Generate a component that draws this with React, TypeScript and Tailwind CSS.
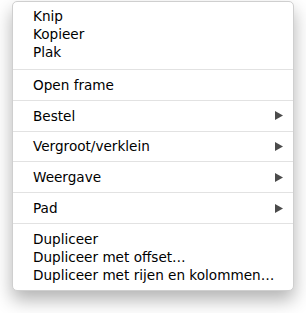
import React from 'react';

interface MenuItem {
  label: string;
  submenu?: boolean;
}

const sections: MenuItem[][] = [
  [{ label: 'Knip' }, { label: 'Kopieer' }, { label: 'Plak' }],
  [{ label: 'Open frame' }],
  [{ label: 'Bestel', submenu: true }],
  [{ label: 'Vergroot/verklein', submenu: true }],
  [{ label: 'Weergave', submenu: true }],
  [{ label: 'Pad', submenu: true }],
  [
    { label: 'Dupliceer' },
    { label: 'Dupliceer met offset…' },
    { label: 'Dupliceer met rijen en kolommen…' },
  ],
];

function Arrow() {
  return (
    <svg width="8" height="9" viewBox="0 0 8 9" className="shrink-0">
      <path d="M0 0 L8 4.5 L0 9 Z" fill="#4b4b4b" />
    </svg>
  );
}

export default function App() {
  return (
    <div className="w-[306px] h-[313px] bg-white pt-px pl-3">
      {/* Context menu */}
      <div
        className="w-[282px] h-[290px] bg-white border border-[#cfcfcf] rounded-[5px] shadow-[0_9px_18px_rgba(0,0,0,0.3)] flex flex-col text-[13.6px] leading-[18px] text-black overflow-hidden"
        style={{ fontFamily: '"DejaVu Sans", "Lucida Grande", sans-serif' }}
      >
        {sections.map((section, i) => {
          const first = i === 0;
          const last = i === sections.length - 1;
          const single = section.length === 1;
          return (
            <div
              key={i}
              className={
                (first ? 'pt-[5px] pb-[8px] ' : '') +
                (last ? 'pt-[6px] pb-[6px] border-t border-[#e2e2e2] ' : '') +
                (single ? 'h-[31px] border-t border-[#e2e2e2] flex items-center' : '')
              }
            >
              <div className="w-full">
                {section.map((item) => (
                  <div key={item.label} className="flex items-center justify-between pl-5 pr-[10px] h-[18px]">
                    <span className="whitespace-nowrap">{item.label}</span>
                    {item.submenu && <Arrow />}
                  </div>
                ))}
              </div>
            </div>
          );
        })}
      </div>
    </div>
  );
}
